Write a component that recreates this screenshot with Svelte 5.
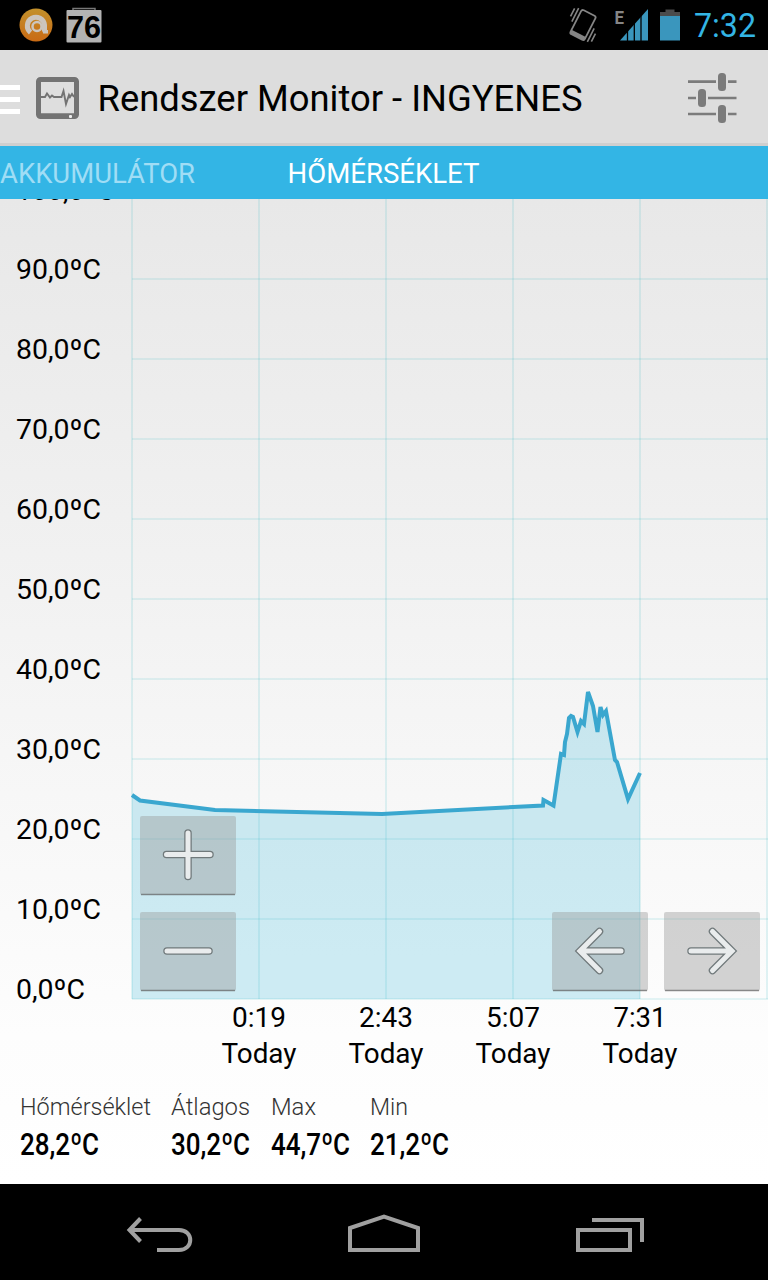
<script>
  const scale = [90, 80, 70, 60, 50, 40, 30, 20, 10, 0];

  const times = [
    { x: 259, time: '0:19', w: 54 },
    { x: 386, time: '2:43', w: 54 },
    { x: 513, time: '5:07', w: 54 },
    { x: 640, time: '7:31', w: 53 }
  ];

  const columns = [132, 259, 386, 513, 640, 767];

  const points = [
    [132, 795], [140, 800.5], [215, 810], [382, 814], [543, 805.5], [543.5, 800],
    [553.5, 805.5], [561, 754], [564, 755], [565, 742], [567, 734], [569, 718], [571, 716], [573, 717],
    [577.5, 732], [581, 721], [584, 724], [588, 692], [593, 706], [597.5, 732],
    [600.5, 707], [603, 715], [606, 711], [615, 760], [617, 762], [628, 799], [640, 773]
  ];

  const stats = [
    { name: 'Hőmérséklet', value: '28,2ºC', w: 131 },
    { name: 'Átlagos', value: '30,2ºC', w: 79 },
    { name: 'Max', value: '44,7ºC', w: 45 },
    { name: 'Min', value: '21,2ºC', w: 38 }
  ];

  const line = points.map((p) => p.join(',')).join(' ');
  const area = `132,999 ${line} 640,999`;
</script>

<div class="screen">
  <div class="status">
    <svg class="left" width="110" height="50" viewBox="0 0 110 50">
      <defs>
        <linearGradient id="orange" x1="0" y1="0" x2="0" y2="1">
          <stop offset="0" stop-color="#c3912c" />
          <stop offset="1" stop-color="#c96a14" />
        </linearGradient>
      </defs>
      <circle cx="36" cy="25" r="16.5" fill="url(#orange)" />
      <path d="M30.500 32.500a8.600 8.600 0 1 1 14-7.500v6.500" fill="none" stroke="#ccc5bd" stroke-width="5" />
      <circle cx="37" cy="26.500" r="4.500" fill="none" stroke="#ccc5bd" stroke-width="2.500" />
      <path d="M42.500 30h5.500v3.500h-5z" fill="#ccc5bd" />
      <path d="M73 10V8.500h22V10" fill="none" stroke="#777" stroke-width="1.500" />
      <rect x="66.500" y="10" width="35" height="32.500" rx="1" fill="#b3b3b3" />
      <text x="67" y="37.500" class="percent" textLength="34" lengthAdjust="spacingAndGlyphs">76</text>
    </svg>
    <svg width="208" height="50" viewBox="560 0 208 50">
      <g transform="rotate(27 583 25)" stroke="#858585" fill="none">
        <rect x="575" y="11.500" width="16" height="27" rx="2" stroke-width="1.800" />
        <path d="M575 36.500h16" stroke-width="4" />
        <path d="M568 14v9M571.500 12v15M594.500 23v15M598 27v9" stroke-width="1.600" />
      </g>
      <text x="614.500" y="23.500" class="edge" textLength="9.500" lengthAdjust="spacingAndGlyphs">E</text>
      <path d="M620 40.500L648 9v31.500z" fill="#3a96bd" />
      <path d="M627.500 28v13M634.300 22v19M641 14v27" stroke="#000" stroke-width="1.300" />
      <path d="M660 16.500V12h5.500V9.500h9V12h5.500v4.500z" fill="#4b4b4b" />
      <rect x="660" y="16" width="20" height="24.500" fill="#3a96bd" />
      <text x="694" y="37" class="clock" textLength="62" lengthAdjust="spacingAndGlyphs">7:32</text>
    </svg>
  </div>

  <div class="actionbar">
    <svg width="98" height="96" viewBox="0 50 98 96">
      <path d="M0 87.500h20M0 99.500h20M0 111.500h20" stroke="#fff" stroke-width="5" />
      <rect x="38.500" y="79.500" width="38" height="37" rx="2" fill="#dedede" stroke="#737373" stroke-width="5" />
      <path d="M38 115.500h39" stroke="#737373" stroke-width="4.500" />
      <rect x="69" y="115" width="3" height="3" rx="1" fill="#eee" />
      <path d="M41 97h4l2-3.500 3 4 2-2 2 1.500h7.500l2-6 2.500 13 3-9 1 2 2-3 2 3" fill="none" stroke="#737373" stroke-width="1.900" />
    </svg>
    <h1><svg width="490" height="50"><text x="-0.500" y="38" textLength="485" lengthAdjust="spacingAndGlyphs">Rendszer Monitor - INGYENES</text></svg></h1>
    <svg class="settings" width="56" height="60" viewBox="684 68 56 60">
      <path d="M688 81.700h28M728 81.700h8.500M688 98h8M708 98h28.500M688 114h28M728 114h8.500" stroke="#7b7b7b" stroke-width="2.700" />
      <rect x="718" y="73" width="8" height="18" rx="3.500" fill="#7b7b7b" />
      <rect x="698" y="89" width="8" height="18" rx="3.500" fill="#7b7b7b" />
      <rect x="718" y="105" width="8" height="18" rx="3.500" fill="#7b7b7b" />
    </svg>
  </div>

  <svg class="tabs" width="768" height="53">
    <text x="0" y="37" fill="#a0ddf5" textLength="195" lengthAdjust="spacingAndGlyphs">AKKUMULÁTOR</text>
    <text x="287.500" y="37" fill="#fff" textLength="192" lengthAdjust="spacingAndGlyphs">HŐMÉRSÉKLET</text>
  </svg>

  <div class="content">
    <svg class="chart" width="768" height="891" viewBox="0 199 768 891">
      <g class="grid">
        {#each columns as x}
          <path d="M{x} 199V999" />
        {/each}
        {#each scale as value}
          <path d="M132 {999 - value * 8}H768" />
        {/each}
      </g>
      <polygon points={area} fill="#33b5d8" fill-opacity=".23" />
      <polyline points={line} fill="none" stroke="#3aa7cf" stroke-width="4" />

      <text x="16" y="199.500" textLength="99" lengthAdjust="spacingAndGlyphs">100,0ºC</text>
      {#each scale as value}
        <text x="16" y={999 - value * 8} textLength={value ? 85 : 69} lengthAdjust="spacingAndGlyphs">{value},0ºC</text>
      {/each}
      {#each times as t}
        <text x={t.x} y="1027" text-anchor="middle" textLength={t.w} lengthAdjust="spacingAndGlyphs">{t.time}</text>
        <text x={t.x} y="1063" text-anchor="middle" textLength="75" lengthAdjust="spacingAndGlyphs">Today</text>
      {/each}

      <g class="button">
        <rect x="140" y="816" width="96" height="79" rx="2" />
        <path class="edge-line" d="M141 894.500h94" />
        <path class="outline" d="M166.500 854.500h43.500M188 833v43.500" />
        <path class="inner" d="M166.500 854.500h43.500M188 833v43.500" />
      </g>
      <g class="button">
        <rect x="140" y="912" width="96" height="79" rx="2" />
        <path class="edge-line" d="M141 990.500h94" />
        <path class="outline" d="M167 951h42" />
        <path class="inner" d="M167 951h42" />
      </g>
      <g class="button">
        <rect x="552" y="912" width="96" height="79" rx="2" />
        <path class="edge-line" d="M553 990.500h94" />
        <path class="outline" d="M621 951h-40M599.500 931.500L580 951l19.500 19.500" />
        <path class="inner" d="M621 951h-40M599.500 931.500L580 951l19.500 19.500" />
      </g>
      <g class="button">
        <rect x="664" y="912" width="96" height="79" rx="2" />
        <path class="edge-line" d="M665 990.500h94" />
        <path class="outline" d="M691 951h40M712.500 931.500L732 951l-19.500 19.500" />
        <path class="inner" d="M691 951h40M712.500 931.500L732 951l-19.500 19.500" />
      </g>
    </svg>

    <div class="stats">
      {#each stats as stat}
        <svg width={Math.max(stat.w, 79)} height="80">
          <text class="name" x="0" y="25" textLength={stat.w} lengthAdjust="spacingAndGlyphs">{stat.name}</text>
          <text class="value" x="0" y="65" textLength="79" lengthAdjust="spacingAndGlyphs">{stat.value}</text>
        </svg>
      {/each}
    </div>
  </div>

  <svg class="navbar" width="768" height="96" viewBox="0 1184 768 96" fill="none" stroke="#a0a0a0" stroke-width="4">
    <path d="M131 1230h48c15 0 15 20 0 20h-22" />
    <path d="M140.500 1218.500L129.500 1230l11 11.500" />
    <path d="M350 1250v-22l34-11.500 34 11.500v22z" />
    <path d="M578 1230h52v20h-52zM592 1220h50v22" />
  </svg>
</div>

<style>
  :global(body) {
    margin: 0;
    background: #000;
  }

  svg {
    display: block;
    flex: none;
  }

  .screen {
    width: 768px;
    height: 1280px;
    overflow: hidden;
    display: flex;
    flex-direction: column;
    font-family: Roboto, "Liberation Sans", sans-serif;
  }

  .status {
    height: 50px;
    display: flex;
    justify-content: space-between;
    background: #000;
  }

  .percent {
    font-family: "Liberation Sans", sans-serif;
    font-size: 32px;
    font-weight: 700;
    fill: #000;
  }

  .edge {
    font-size: 19px;
    font-weight: 700;
    fill: #858585;
  }

  .clock {
    font-size: 33px;
    fill: #33b5e5;
  }

  .actionbar {
    height: 96px;
    display: flex;
    align-items: center;
    background: linear-gradient(#ddd 93px, #cfcfcf 93px);
  }

  h1 {
    margin: 0;
    font-size: 36px;
    font-weight: 400;
  }

  .settings {
    margin-left: auto;
    margin-right: 28px;
  }

  .tabs {
    background: #33b5e5;
    font-size: 28px;
  }

  .content {
    height: 985px;
    background: linear-gradient(#e8e8e8, #f4f4f4 48%, #fdfdfd 85%, #fff);
  }

  .chart {
    font-size: 28px;
  }

  .grid path {
    stroke: #33b5c5;
    stroke-opacity: .17;
    stroke-width: 1.7;
  }

  .button rect {
    fill: #999;
    fill-opacity: .42;
  }

  .edge-line {
    stroke: #555;
    stroke-opacity: .6;
    stroke-width: 1.5;
  }

  .outline,
  .inner {
    fill: none;
    stroke-linejoin: miter;
    stroke-linecap: round;
  }

  .outline {
    stroke: #70797b;
    stroke-width: 7.5;
  }

  .inner {
    stroke: #e9eced;
    stroke-width: 5;
  }

  .stats {
    display: flex;
    gap: 20.4px;
    padding-left: 20px;
  }

  .name {
    font-size: 24px;
    font-weight: 300;
    fill: #333;
  }

  .value {
    font-size: 31px;
    font-weight: 500;
  }

  .navbar {
    background: #000;
  }
</style>
